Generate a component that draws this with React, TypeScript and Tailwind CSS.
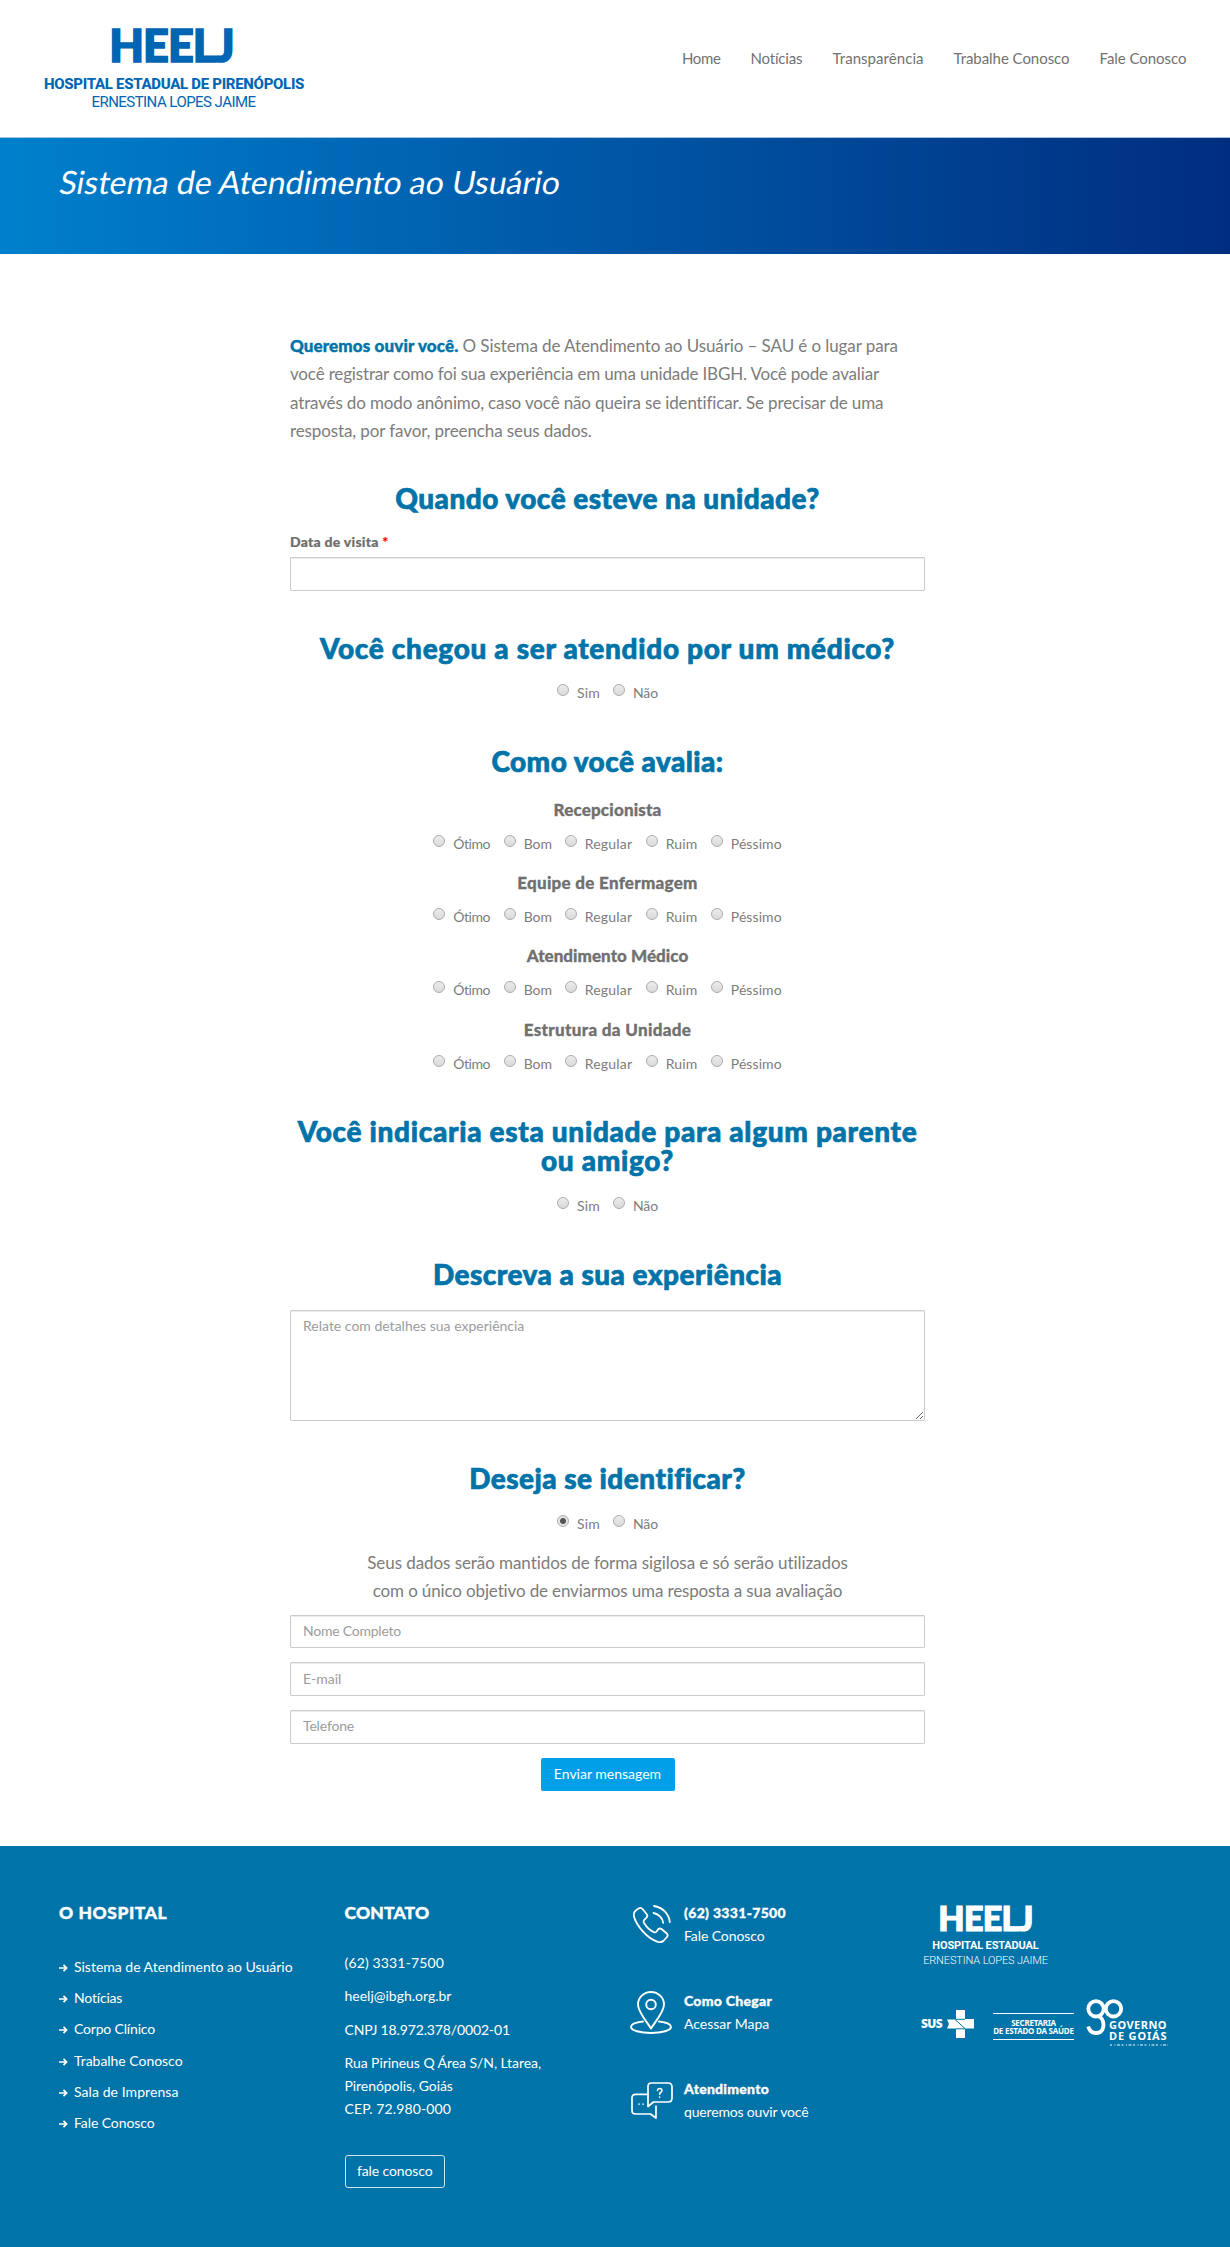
import React from 'react';

type Option = { text: string; cls: string };

const yesNo: Option[] = [
  { text: 'Sim', cls: 'w-[23px] tracking-[0.2px]' },
  { text: 'Não', cls: 'w-[25px] tracking-[-0.12px]' },
];

const scale: Option[] = [
  { text: 'Ótimo', cls: 'w-[37.5px] tracking-[-0.45px]' },
  { text: 'Bom', cls: 'w-[28px] tracking-[-0.1px]' },
  { text: 'Regular', cls: 'w-[48px] tracking-[0.19px]' },
  { text: 'Ruim', cls: 'w-[32px] tracking-[0.08px]' },
  { text: 'Péssimo', cls: 'w-[51px] tracking-[0.09px]' },
];

const subjects = [
  { title: 'Recepcionista', cls: 'tracking-[0.18px]' },
  { title: 'Equipe de Enfermagem', cls: 'tracking-[0.28px]' },
  { title: 'Atendimento Médico', cls: 'tracking-[0.04px]' },
  { title: 'Estrutura da Unidade', cls: 'tracking-[0.33px]' },
];

const nav = [
  { text: 'Home', cls: 'w-[38.6px] tracking-[-0.35px]' },
  { text: 'Notícias', cls: 'w-[52px] tracking-[-0.19px]' },
  { text: 'Transparência', cls: 'w-[91px] tracking-[0.05px]' },
  { text: 'Trabalhe Conosco', cls: 'w-[116px] tracking-[-0.05px]' },
  { text: 'Fale Conosco', cls: 'w-[86.500px] tracking-[-0.04px]' },
];

const links = [
  { text: 'Sistema de Atendimento ao Usuário', cls: 'tracking-[-0.01px]' },
  { text: 'Notícias', cls: 'tracking-[-0.19px]' },
  { text: 'Corpo Clínico', cls: 'tracking-[-0.18px]' },
  { text: 'Trabalhe Conosco', cls: 'tracking-[-0.03px]' },
  { text: 'Sala de Imprensa', cls: 'tracking-[0.07px]' },
  { text: 'Fale Conosco', cls: 'tracking-[-0.09px]' },
];

function Heading({ children, className }: { children: React.ReactNode; className: string }) {
  return (
    <h2 className={`text-center text-[28px] leading-[29px] font-black whitespace-nowrap text-[#0073a8] [-webkit-text-stroke:0.7px_#0073a8] ${className}`}>
      {children}
    </h2>
  );
}

function Radios({ name, options, checked, className = '' }: { name: string; options: Option[]; checked?: string; className?: string }) {
  return (
    <div className={`flex justify-center gap-[13px] ${className}`}>
      {options.map((o) => (
        <label key={o.text} className="flex h-5 items-start gap-2 text-sm leading-5 whitespace-nowrap">
          <input
            type="radio"
            name={name}
            defaultChecked={o.text === checked}
            className="mt-px size-3 appearance-none rounded-full border border-[#acacac] bg-linear-to-b from-[#ececec] to-[#dadada] checked:bg-[radial-gradient(circle,#555_0_2.6px,#e4e4e4_3.4px)]"
          />
          <span className={o.cls}>{o.text}</span>
        </label>
      ))}
    </div>
  );
}

const field =
  'block w-full rounded-[1px] border border-[#ccc] bg-white px-[12px] text-sm text-[#7c7c7c] shadow-[inset_0_1px_1px_rgba(0,0,0,0.08)] placeholder:text-[#9c9c9c] placeholder:opacity-100';

function PhoneIcon() {
  return (
    <svg width="38" height="39" viewBox="0 0 38 39" fill="none" stroke="white" strokeWidth="1.8" strokeLinecap="round" strokeLinejoin="round">
      <path d="M2.500 5.700 L5.600 3.400 Q7.800 2 9.500 4 L13.800 9.300 Q15 11 13.500 12.600 L11 15.200 Q10.200 16.400 11 18 Q15 24.500 20.800 27.200 Q22.400 27.800 23.600 26.500 L25 24.400 Q26.600 22.800 28.500 24 L33.500 28.200 Q35.500 30 34 32 L30.800 35.500 Q28.500 37.800 24.800 36.800 C14 33.500 3 20 0.900 11.300 Q0.200 7.700 2.500 5.700 Z" />
      <path d="M21 1 C29.500 2.200 36 9 36.800 17.200" />
      <path d="M20.500 8 C25.500 9 29.500 13 30.200 17.800" />
    </svg>
  );
}

function PinIcon() {
  return (
    <svg width="42" height="43" viewBox="0 0 42 43" fill="none" stroke="white" strokeWidth="1.900" strokeLinecap="round" strokeLinejoin="round">
      <path d="M21 37.500 C17 31 8 21 8 13.500 A13 12.500 0 0 1 34 13.500 C34 21 25 31 21 37.500 Z" />
      <circle cx="21" cy="13.500" r="4.800" />
      <path d="M13 30.500 C5.500 31.300 1 33.400 1 36 C1 39.300 10 42 21 42 S41 39.300 41 36 C41 33.400 36.500 31.300 29 30.500" />
    </svg>
  );
}

function ChatIcon() {
  return (
    <svg width="42" height="37" viewBox="0 0 42 37" fill="none" stroke="white" strokeWidth="1.700" strokeLinecap="round" strokeLinejoin="round">
      <path d="M20.500 1 H37 Q41 1 41 5 V16 Q41 20 37 20 H22.500 L17 24.500 V4.500 Q17 1 20.500 1 Z" />
      <path d="M17 12.300 H4.500 Q1 12.300 1 16 V28.500 Q1 32 4.500 32 H19.500 L25 36 V24" />
      <path d="M26.500 8.500 Q26.700 6.500 28.700 6.500 Q30.900 6.500 30.900 8.500 Q30.900 9.800 29.600 10.500 Q28.600 11.200 28.600 12.200 M28.600 15 V15.200 M8 22 V22.200 M12 22 V22.200" strokeWidth="1.600" />
    </svg>
  );
}

function Support({ icon, iconClass, title, titleClass, text, textClass }: { icon: React.ReactNode; iconClass: string; title: string; titleClass: string; text: string; textClass: string }) {
  return (
    <div className="flex h-[88px] items-start text-sm leading-[23.5px]">
      <div className={`w-[54px] ${iconClass}`}>{icon}</div>
      <div>
        <div className={`font-black [-webkit-text-stroke:0.3px_white] ${titleClass}`}>{title}</div>
        <div className={textClass}>{text}</div>
      </div>
    </div>
  );
}

export default function App() {
  return (
    <div className="w-[1230px] bg-white font-[Lato,sans-serif] text-[#7c7c7c]">
      <header className="flex h-[137px] justify-between pr-[44px] pl-[44px]">
        <div className="w-[259px] pt-[22.500px] text-center whitespace-nowrap text-[#0066b3]">
          <div className="-ml-1 text-[45px] leading-[45px] font-black tracking-[-1px] [-webkit-text-stroke:1.600px_#0066b3]">HEELJ</div>
          <div className="mt-[8.500px] font-[Roboto] text-[15px] leading-[17.5px] font-extrabold tracking-[-0.3px]">HOSPITAL ESTADUAL DE PIRENÓPOLIS</div>
          <div className="font-[Roboto] text-[15px] leading-[17.5px] tracking-[-0.54px]">ERNESTINA LOPES JAIME</div>
        </div>
        <nav className="flex gap-[30px] pt-[48px] text-[15px] leading-5 whitespace-nowrap text-[#727272]">
          {nav.map((n) => (
            <a key={n.text} className={n.cls}>{n.text}</a>
          ))}
        </nav>
      </header>

      <div className="h-[117px] border-t border-[#a5c4e0] bg-linear-to-r from-[#0080cc] to-[#002d80] pt-[24px] pl-[60px]">
        <h1 className="inline-block -skew-x-[10deg] text-[32px] leading-[40px] whitespace-nowrap text-white">Sistema de Atendimento ao Usuário</h1>
      </div>

      <main className="ml-[290px] h-[1592px] w-[635px] pt-[78px]">
        <p className="text-[17px] leading-[28.3px] whitespace-nowrap">
          <span className="tracking-[-0.09px]">
            <strong className="font-black tracking-[0.12px] text-[#0073a8] [-webkit-text-stroke:0.4px_#0073a8]">Queremos ouvir você.</strong> O Sistema de Atendimento ao Usuário – SAU é o lugar para
          </span>
          <br />
          <span className="tracking-[-0.16px]">você registrar como foi sua experiência em uma unidade IBGH. Você pode avaliar</span>
          <br />
          <span className="tracking-[-0.14px]">através do modo anônimo, caso você não queira se identificar. Se precisar de uma</span>
          <br />
          <span className="tracking-[-0.11px]">resposta, por favor, preencha seus dados.</span>
        </p>

        <Heading className="mt-[38.500px] tracking-[0.47px]">Quando você esteve na unidade?</Heading>
        <label className="mt-[19px] block text-sm leading-5 font-black tracking-[0.25px] text-[#6e6e6e] [-webkit-text-stroke:0.2px]">
          Data de visita <span className="text-[#f00]">*</span>
        </label>
        <input type="text" className={`mt-[5.5px] h-[33.500px] ${field}`} />

        <Heading className="mt-[43px] tracking-[0.68px]">Você chegou a ser atendido por um médico?</Heading>
        <Radios name="atendido" options={yesNo} className="mt-[20.500px]" />

        <Heading className="mt-[43.5px] tracking-[0.45px]">Como você avalia:</Heading>
        <div className="mt-[22.5px]">
          {subjects.map((s) => (
            <div key={s.title} className="h-[73.15px]">
              <h3 className={`text-center text-[17px] leading-6 font-black text-[#707070] [-webkit-text-stroke:0.3px] ${s.cls}`}>{s.title}</h3>
              <Radios name={s.title} options={scale} className="mt-[12px]" />
            </div>
          ))}
        </div>

        <Heading className="mt-[26.500px] tracking-[0.68px]">
          Você indicaria esta unidade para algum parente
          <br />
          ou amigo?
        </Heading>
        <Radios name="indicaria" options={yesNo} className="mt-[21px]" />

        <Heading className="mt-[43.5px] tracking-[0.46px]">Descreva a sua experiência</Heading>
        <textarea
          placeholder="Relate com detalhes sua experiência"
          className={`mt-[21.5px] h-[111px] resize-y pt-[5px] leading-5 ${field}`}
        />

        <Heading className="mt-[43px] tracking-[0.46px]">Deseja se identificar?</Heading>
        <Radios name="identificar" options={yesNo} checked="Sim" className="mt-[20.5px]" />

        <p className="mt-[15px] text-center text-[17px] leading-[28.4px] whitespace-nowrap">
          <span className="tracking-[-0.07px]">Seus dados serão mantidos de forma sigilosa e só serão utilizados</span>
          <br />
          <span className="tracking-[-0.14px]">com o único objetivo de enviarmos uma resposta a sua avaliação</span>
        </p>
        <div className="mt-[9px] flex flex-col gap-[14.300px]">
          <input type="text" placeholder="Nome Completo" className={`h-[33.500px] pb-[2px] tracking-[-0.23px] ${field}`} />
          <input type="email" placeholder="E-mail" className={`h-[33.500px] pb-[2px] ${field}`} />
          <input type="tel" placeholder="Telefone" className={`h-[33.500px] pb-[2px] tracking-[-0.17px] ${field}`} />
        </div>
        <button className="mx-auto mt-[14.500px] block h-[33px] w-[134px] rounded-[2px] bg-[#009fe8] pb-[2px] text-sm whitespace-nowrap text-white">
          Enviar mensagem
        </button>
      </main>

      <footer className="grid h-[401px] grid-cols-[285.5px_285.5px_290px_1fr] bg-[#0073a8] pt-[54.5px] pl-[59px] text-sm whitespace-nowrap text-white">
        <div>
          <h4 className="text-[17.500px] leading-6 font-black tracking-[0.55px] [-webkit-text-stroke:0.4px_white]">O HOSPITAL</h4>
          <ul className="mt-[32.500px]">
            {links.map((l) => (
              <li key={l.text} className="flex h-[31.200px] items-start leading-5">
                <svg width="9" height="8" viewBox="0 0 9 8" className="mt-[7px] mr-[6px]" fill="none" stroke="white" strokeWidth="1.700">
                  <path d="M0 4 H7 M4.500 0.800 L7.600 4 L4.500 7.200" />
                </svg>
                <a className={l.cls}>{l.text}</a>
              </li>
            ))}
          </ul>
        </div>

        <div className="leading-[23.3px]">
          <h4 className="mb-[26.500px] text-[17.500px] leading-6 font-black tracking-[0.15px] [-webkit-text-stroke:0.4px_white]">CONTATO</h4>
          <p className="mb-[10px] tracking-[0.15px]">(62) 3331-7500</p>
          <p className="mb-[10px]">heelj@ibgh.org.br</p>
          <p className="mb-[10px] tracking-[-0.14px]">CNPJ 18.972.378/0002-01</p>
          <p className="tracking-[-0.06px]">
            Rua Pirineus Q Área S/N, Ltarea,
            <br />
            Pirenópolis, Goiás
            <br />
            <span className="tracking-[0.11px]">CEP. 72.980-000</span>
          </p>
          <a className="mt-[34px] flex h-[33.500px] w-[100.500px] items-center justify-center rounded-[3px] border border-[#cfe6f1] pb-[1.500px] tracking-[-0.12px]">fale conosco</a>
        </div>

        <div>
          <Support icon={<PhoneIcon />} iconClass="pt-[4.500px] pl-[3px]" title="(62) 3331-7500" titleClass="tracking-[0.32px]" text="Fale Conosco" textClass="tracking-[-0.09px]" />
          <Support icon={<PinIcon />} iconClass="pt-[2px]" title="Como Chegar" titleClass="tracking-[0.28px]" text="Acessar Mapa" textClass="" />
          <Support icon={<ChatIcon />} iconClass="pt-[5.500px] pl-px" title="Atendimento" titleClass="tracking-[0.26px]" text="queremos ouvir você" textClass="tracking-[-0.17px]" />
        </div>

        <div>
          <div className="ml-[3px] w-[125px] text-center">
            <div className="text-[34px] leading-[34px] font-black tracking-[-0.700px] [-webkit-text-stroke:1.200px_white]">HEELJ</div>
            <div className="mt-[4.500px] font-[Roboto] text-[11px] leading-[14.500px] font-bold tracking-[-0.15px]">HOSPITAL ESTADUAL</div>
            <div className="font-[Roboto] text-[11px] leading-[14.500px] font-light tracking-[-0.13px]">ERNESTINA LOPES JAIME</div>
          </div>
          <div className="mt-[31px] flex h-[48px] items-start">
            <div className="mt-[11px] flex h-[28px] w-[73px] items-center pl-px">
              <span className="w-[24px] font-['Noto_Sans'] text-[12px] leading-[28px] font-black tracking-[-0.6px]">SUS</span>
              <svg width="28" height="28" viewBox="0 0 28 28" className="ml-[1px]">
                <path fill="white" d="M10 0 H19 V9 H28 V18.500 H19 V28 H10 V18.500 H1 L3 14 L1 9.500 H10 Z" />
                <path stroke="#0073a8" strokeWidth="1" fill="none" d="M9 9.500 L19 18.500 M10 9.300 H19 M10 18.800 H19" />
              </svg>
            </div>
            <div className="mt-[14px] h-[27px] w-[81px] border-y border-white pt-[5px] text-center font-['Noto_Sans'] text-[8px] leading-[7.500px] font-bold">
              <div className="tracking-[-0.25px]">SECRETARIA</div>
              <div className="tracking-[-0.24px]">DE ESTADO DA SAÚDE</div>
            </div>
            <div className="relative ml-[12px] h-[48px] w-[82px]">
              <svg width="82" height="48" viewBox="0 0 82 48" fill="none" stroke="white" strokeWidth="3.800">
                <circle cx="10" cy="9.800" r="7.700" />
                <circle cx="27.500" cy="9.800" r="7.700" />
                <path d="M12 17 Q17.500 19 17.500 26 Q17 34 10 34 Q4 34 2.200 27.500" />
                <path strokeWidth="1.200" strokeDasharray="2 2.500 1 1.500 3 1.500" d="M24 46 H82" />
              </svg>
              <div className="absolute top-[20px] left-[23px] font-['Noto_Sans'] text-[11px] leading-[11px] font-bold">
                <div className="tracking-[0.47px]">GOVERNO</div>
                <div className="tracking-[0.85px]">DE GOIÁS</div>
              </div>
            </div>
          </div>
        </div>
      </footer>
    </div>
  );
}
